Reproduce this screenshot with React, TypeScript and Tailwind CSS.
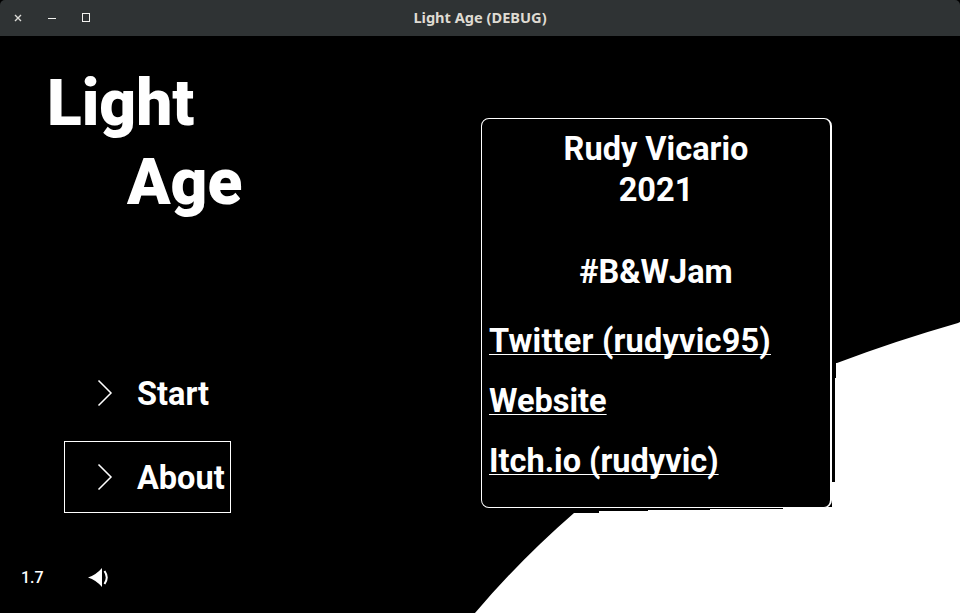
import React from "react";

const links = [
  { label: "Twitter (rudyvic95)", className: "tracking-[0.2px]" },
  { label: "Website", className: "" },
  { label: "Itch.io (rudyvic)", className: "" },
];

function Chevron() {
  return (
    <svg width="16" height="28" viewBox="0 0 16 28" fill="none" className="shrink-0">
      <path d="M1.5 1.5 L14 14 L1.5 26.5" stroke="white" strokeWidth="1.5" />
    </svg>
  );
}

function MenuItem({ label, active }: { label: string; active?: boolean }) {
  return (
    <div
      className={
        "flex h-[72px] w-[167px] items-center border pl-[32px] " +
        (active ? "border-white" : "border-transparent")
      }
    >
      <Chevron />
      <span className="ml-[24px] whitespace-nowrap pt-[2px] text-[32.5px] font-bold leading-none text-white">{label}</span>
    </div>
  );
}

function Backdrop() {
  return (
    <svg
      className="absolute left-0 top-0"
      width="960"
      height="577"
      viewBox="0 36 960 577"
    >
      <path
        fill="white"
        d="M960 322 L958 323 Q895 341 837 363 L836 363 L836 378 L835 378 L835 482 L832 482 L832 507 L783 507 L783 509 L710 509 L710 510 L648 510 L648 511 L599 511 L599 513 L574 513 Q520 560 475 613 L960 613 Z"
      />
    </svg>
  );
}

function TitleBar() {
  return (
    <div className="relative flex h-9 shrink-0 items-center justify-center rounded-t-[5px] bg-[#2f3334]">
      <svg className="absolute left-[14px] top-[14px]" width="8" height="8" viewBox="0 0 8 8">
        <path d="M1 1 L7 7 M7 1 L1 7" stroke="#dcdcd8" strokeWidth="1.4" />
      </svg>
      <div className="absolute left-[48px] top-[18px] h-px w-[8px] bg-[#f2f2ef]" />
      <div className="absolute left-[82px] top-[13px] h-[9px] w-[8px] border border-[#f2f2ef]" />
      <span className="font-['Noto_Sans',sans-serif] text-[14.6px] font-bold text-[#dfdbd2]">Light Age (DEBUG)</span>
    </div>
  );
}

export default function App() {
  return (
    <div className="flex h-[613px] w-[960px] flex-col overflow-hidden bg-black font-['Roboto',sans-serif] text-white">
      <TitleBar />
      <div className="relative flex flex-1">
        <Backdrop />
        <div className="relative flex w-[481px] shrink-0 flex-col">
          <div className="mt-[28px] text-[64px] font-black leading-[79px]">
            <div className="pl-[47px]">Light</div>
            <div className="pl-[127px]">Age</div>
          </div>
          <div className="ml-[64px] mt-[135px] flex flex-col gap-3">
            <MenuItem label="Start" />
            <MenuItem label="About" active />
          </div>
          <div className="mt-[54px] flex items-center pl-[21px]">
            <span className="w-[67px] text-[16px] font-medium leading-[22px]">1.7</span>
            <svg width="22" height="22" viewBox="0 0 22 22">
              <path d="M0 10.5 Q8 8 14 1 L14 20 Q8 13 0 10.5 Z" fill="white" />
              <path d="M16.5 4 Q21 10.5 16.5 17" fill="none" stroke="white" strokeWidth="2" />
            </svg>
          </div>
        </div>
        <div className="relative mt-[82px] flex h-[390px] w-[351px] flex-col rounded-lg border border-r-2 border-white bg-black px-[7px] pt-[10px]">
          <div className="text-center text-[32.5px] font-bold leading-[41px]">
            <div>Rudy Vicario</div>
            <div>2021</div>
            <div className="h-[41px]" />
            <div>#B&amp;WJam</div>
          </div>
          <div className="mt-[18px] flex flex-col">
            {links.map((link) => (
              <a
                key={link.label}
                className={
                  "text-[32.5px] font-bold leading-[60px] underline decoration-1 underline-offset-2 [text-decoration-skip-ink:none] " +
                  link.className
                }
              >
                {link.label}
              </a>
            ))}
          </div>
        </div>
      </div>
    </div>
  );
}
